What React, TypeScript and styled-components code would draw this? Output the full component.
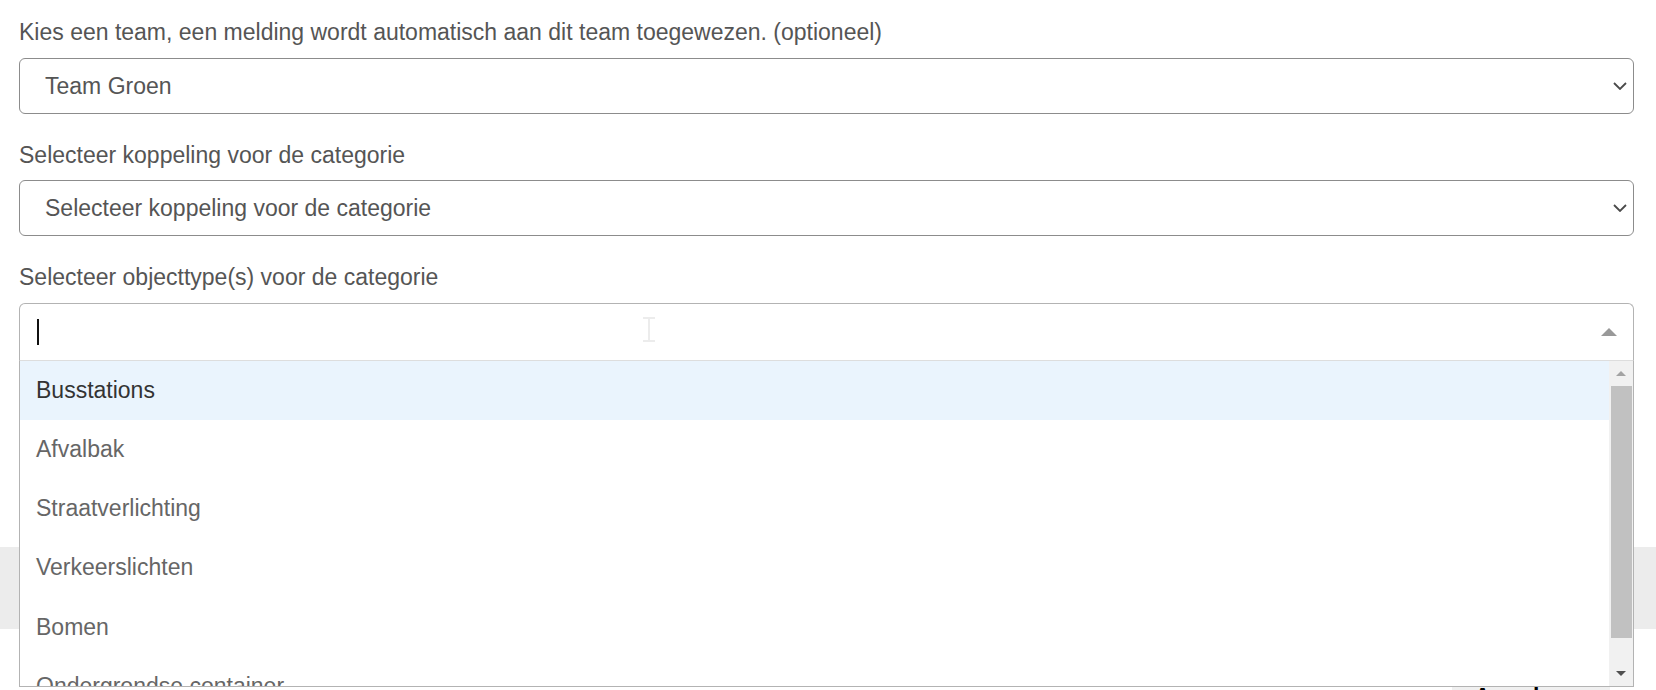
import React from 'react';
import styled, { createGlobalStyle } from 'styled-components';

const GRAY_TEXT = '#555555';
const FONT = '"Liberation Sans", Arial, sans-serif';

const GlobalStyle = createGlobalStyle`
  * {
    box-sizing: border-box;
  }
  body {
    margin: 0;
    background: #ffffff;
    font-family: ${FONT};
  }
`;

const Form = styled.div`
  padding: 15px 22px 162px 19px;
`;

const FormGroup = styled.div`
  margin-bottom: 24px;
`;

const Label = styled.label`
  display: block;
  font-size: 23px;
  line-height: 34.5px;
  color: ${GRAY_TEXT};
  margin-bottom: 8px;
`;

const SelectWrap = styled.div`
  position: relative;
`;

const Select = styled.select`
  appearance: none;
  display: block;
  width: 100%;
  height: 56px;
  padding: 0 48px 0 25px;
  border: 1px solid #8c8c8c;
  border-radius: 6px;
  background: #ffffff;
  font-family: ${FONT};
  font-size: 23px;
  color: ${GRAY_TEXT};
  outline: none;
`;

const Chevron = styled.svg`
  position: absolute;
  right: 7px;
  top: 50%;
  margin-top: -4px;
  pointer-events: none;
`;

const Combo = styled.div`
  position: relative;
  display: flex;
  align-items: center;
  justify-content: space-between;
  height: 58px;
  padding: 0 16px 0 17px;
  border: 1px solid #b3b3b3;
  border-bottom-color: #dddddd;
  border-radius: 6px 6px 0 0;
  background: #ffffff;
`;

const Caret = styled.span`
  display: block;
  width: 2px;
  height: 26px;
  background: #111111;
`;

const Beam = styled.svg`
  position: absolute;
  left: 622px;
  top: 13px;
`;

const Menu = styled.div`
  position: absolute;
  top: 100%;
  left: 0;
  right: 0;
  height: 326px;
  display: flex;
  border: 1px solid #b3b3b3;
  border-top: none;
  background: #ffffff;
  z-index: 10;
`;

const OptionList = styled.ul`
  flex: 1;
  margin: 0;
  padding: 0;
  list-style: none;
  overflow: hidden;
`;

const Option = styled.li<{ $active?: boolean }>`
  padding: 12px 16px;
  font-size: 23px;
  line-height: 35.3px;
  color: ${(p) => (p.$active ? '#333333' : '#666666')};
  background: ${(p) => (p.$active ? '#eaf4fd' : 'transparent')};
  white-space: nowrap;
`;

const Scrollbar = styled.div`
  width: 24px;
  display: flex;
  flex-direction: column;
  background: #f1f1f1;
`;

const ScrollButton = styled.div`
  height: 25px;
  display: flex;
  align-items: center;
  justify-content: center;
`;

const Thumb = styled.div`
  height: 252px;
  margin: 0 1px 0 2px;
  background: #c1c1c1;
`;

const Track = styled.div`
  flex: 1;
`;

const Band = styled.div`
  height: 82px;
  background: #ececec;
`;

const Footer = styled.div`
  display: flex;
  justify-content: flex-end;
  padding: 48px 46px 20px 19px;
`;

const Button = styled.button`
  padding: 9px 22px;
  border: none;
  border-radius: 4px;
  background: #f0f0f0;
  font-family: ${FONT};
  font-size: 23px;
  font-weight: bold;
  line-height: 23px;
  color: #000000;
`;

const options = [
  'Busstations',
  'Afvalbak',
  'Straatverlichting',
  'Verkeerslichten',
  'Bomen',
  'Ondergrondse container',
];

const ChevronDown = () => (
  <Chevron width="14" height="8" viewBox="0 0 14 8">
    <path d="M1 1l6 6 6-6" fill="none" stroke="#4a4a4a" strokeWidth="1.8" />
  </Chevron>
);

const Triangle = ({ up, color, w, h }: { up: boolean; color: string; w: number; h: number }) => (
  <svg width={w} height={h} viewBox={`0 0 ${w} ${h}`}>
    <polygon points={up ? `0,${h} ${w / 2},0 ${w},${h}` : `0,0 ${w},0 ${w / 2},${h}`} fill={color} />
  </svg>
);

const App = () => {
  return (
    <>
      <GlobalStyle />
      <Form>
        <FormGroup>
          <Label>Kies een team, een melding wordt automatisch aan dit team toegewezen. (optioneel)</Label>
          <SelectWrap>
            <Select defaultValue="groen">
              <option value="groen">Team Groen</option>
              <option value="wegen">Team Wegen</option>
            </Select>
            <ChevronDown />
          </SelectWrap>
        </FormGroup>
        <FormGroup>
          <Label>Selecteer koppeling voor de categorie</Label>
          <SelectWrap>
            <Select defaultValue="">
              <option value="">Selecteer koppeling voor de categorie</option>
            </Select>
            <ChevronDown />
          </SelectWrap>
        </FormGroup>
        <FormGroup>
          <Label>Selecteer objecttype(s) voor de categorie</Label>
          <SelectWrap>
            <Combo>
              <Caret />
              <Triangle up color="#999999" w={16} h={8} />
              <Beam width="14" height="25" viewBox="0 0 14 25">
                <path d="M1 1h12M1 24h12M7 1v23" fill="none" stroke="#ececec" strokeWidth="2" />
              </Beam>
            </Combo>
            <Menu>
              <OptionList>
                {options.map((o, i) => (
                  <Option key={o} $active={i === 0}>
                    {o}
                  </Option>
                ))}
              </OptionList>
              <Scrollbar>
                <ScrollButton>
                  <Triangle up color="#a3a3a3" w={10} h={5} />
                </ScrollButton>
                <Thumb />
                <Track />
                <ScrollButton>
                  <Triangle up={false} color="#505050" w={10} h={5} />
                </ScrollButton>
              </Scrollbar>
            </Menu>
          </SelectWrap>
        </FormGroup>
      </Form>
      <Band />
      <Footer>
        <Button>Annuleren</Button>
      </Footer>
    </>
  );
};

export default App;
